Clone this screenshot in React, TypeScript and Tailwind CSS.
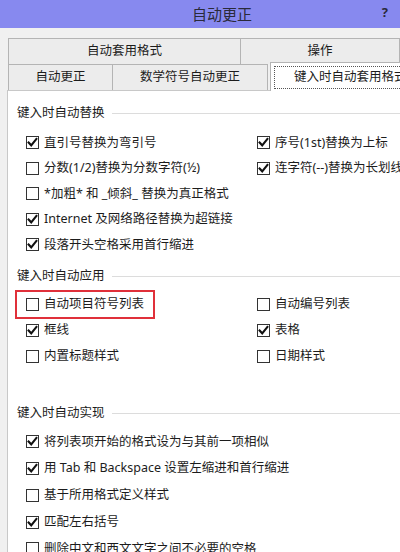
import React from "react";

const font = { fontFamily: '"Noto Sans", "Noto Sans CJK SC", sans-serif' };

function Box({ checked }: { checked: boolean }) {
  return (
    <span className="w-[13px] h-[13px] shrink-0 border border-[#333333] bg-white flex items-center justify-center">
      {checked && (
        <svg width="11" height="11" viewBox="0 0 11 11">
          <path d="M1.6 5.6 L4.2 8.3 L9.4 1.9" fill="none" stroke="#111" strokeWidth="2.1" strokeLinecap="square" strokeLinejoin="miter" />
        </svg>
      )}
    </span>
  );
}

function Item({ checked, label, h }: { checked: boolean; label: string; h: string }) {
  return (
    <div className={`flex items-center gap-[5px] whitespace-nowrap ${h}`}>
      <Box checked={checked} />
      <span className="text-[12.5px] leading-none text-[#1c1c1c]">{label}</span>
    </div>
  );
}

function Heading({ label }: { label: string }) {
  return (
    <div className="flex items-center h-[16px] pl-[9px]">
      <span className="text-[12.5px] leading-none text-[#1c1c1c] whitespace-nowrap">{label}</span>
      <div className="flex-1 ml-[7px] h-px bg-[#dcdcdc]" />
    </div>
  );
}

export default function App() {
  return (
    <div className="w-[400px] h-[552px] overflow-hidden bg-[#f0f0f0] flex flex-col" style={font}>
      {/* title bar */}
      <div className="h-[28px] bg-[#8789ef] flex items-center relative shrink-0">
        <div className="flex-1 text-center pl-[44px] text-[15px] text-[#2a2a3a]">自动更正</div>
        <div className="absolute right-[12px] top-[3px] text-[13px] font-bold text-[#2a2a3a]">?</div>
      </div>
      <div className="h-[10px] shrink-0" />
      {/* tabs row 1 */}
      <div className="flex h-[26px] pl-[8px] shrink-0">
        <div className="w-[233px] border border-[#b4b4b4] border-b-0 bg-[#ececec] flex items-center justify-center text-[12.5px] text-[#1c1c1c]">
          自动套用格式
        </div>
        <div className="flex-1 border-t border-r border-[#b4b4b4] bg-[#ececec] flex items-center justify-center text-[12.5px] text-[#1c1c1c]">
          操作
        </div>
      </div>
      {/* tabs row 2 */}
      <div className="flex h-[26px] pl-[8px] shrink-0 relative">
        <div className="w-[105px] border border-[#b4b4b4] border-b-0 bg-[#ececec] flex items-center justify-center text-[12.5px] text-[#1c1c1c]">
          自动更正
        </div>
        <div className="w-[155px] border-t border-r border-[#b4b4b4] bg-[#ececec] flex items-center justify-center text-[12.5px] text-[#1c1c1c]">
          数学符号自动更正
        </div>
        <div className="absolute left-[270px] right-0 top-[-2px] bottom-[-1px] bg-white border-t border-l border-[#b4b4b4] pl-[3px] pt-[3px] pb-[2px] z-10">
          <div className="h-full border border-dotted border-[#555] border-r-0 flex items-center pl-[19px] text-[12.5px] text-[#1c1c1c] whitespace-nowrap overflow-hidden">
            键入时自动套用格式
          </div>
        </div>
      </div>
      {/* panel */}
      <div className="flex-1 ml-[7px] bg-white border-l border-t border-[#c8c8c8] flex flex-col pt-[14px]">
        <Heading label="键入时自动替换" />
        <div className="pl-[18px] pt-[9px] grid grid-cols-[231px_1fr]">
          <Item checked label="直引号替换为弯引号" h="h-[25.5px]" />
          <Item checked label="序号(1st)替换为上标" h="h-[25.5px]" />
          <Item checked={false} label="分数(1/2)替换为分数字符(½)" h="h-[25.5px]" />
          <Item checked label="连字符(--)替换为长划线" h="h-[25.5px]" />
          <div className="col-span-2">
            <Item checked={false} label="*加粗* 和 _倾斜_ 替换为真正格式" h="h-[25.5px]" />
          </div>
          <div className="col-span-2">
            <Item checked label="Internet 及网络路径替换为超链接" h="h-[25.5px]" />
          </div>
          <div className="col-span-2">
            <Item checked label="段落开头空格采用首行缩进" h="h-[25.5px]" />
          </div>
        </div>
        <div className="h-[11px]" />
        <Heading label="键入时自动应用" />
        <div className="pl-[18px] pt-[7px] grid grid-cols-[231px_1fr]">
          <div className="relative">
            <div className="absolute left-[-11px] top-[-2px] w-[140px] h-[29px] border-2 border-[#e0303a]" />
            <Item checked={false} label="自动项目符号列表" h="h-[26px]" />
          </div>
          <Item checked={false} label="自动编号列表" h="h-[26px]" />
          <Item checked label="框线" h="h-[26px]" />
          <Item checked label="表格" h="h-[26px]" />
          <Item checked={false} label="内置标题样式" h="h-[26px]" />
          <Item checked={false} label="日期样式" h="h-[26px]" />
        </div>
        <div className="h-[36px]" />
        <Heading label="键入时自动实现" />
        <div className="pl-[18px] pt-[7px] flex flex-col">
          <Item checked label="将列表项开始的格式设为与其前一项相似" h="h-[26.75px]" />
          <Item checked label="用 Tab 和 Backspace 设置左缩进和首行缩进" h="h-[26.75px]" />
          <Item checked={false} label="基于所用格式定义样式" h="h-[26.75px]" />
          <Item checked label="匹配左右括号" h="h-[26.75px]" />
          <Item checked={false} label="删除中文和西文文字之间不必要的空格" h="h-[26.75px]" />
        </div>
      </div>
    </div>
  );
}
